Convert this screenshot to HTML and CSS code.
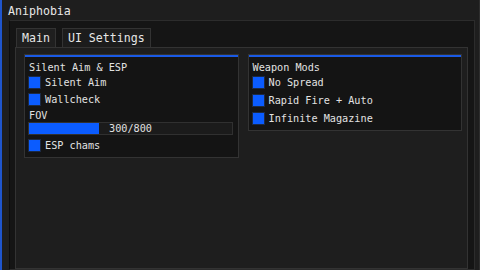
FILE: index.html
```html
<!DOCTYPE html>
<html>
<head>
<meta charset="utf-8">
<link rel="stylesheet" href="styles.css">
</head>
<body>
<div class="window">
  <div class="title">Aniphobia</div>
  <div class="child">
    <div class="tabs">
      <div class="tab active">Main</div>
      <div class="tab">UI Settings</div>
    </div>
    <div class="panel">
      <div class="group">
        <div class="gtitle">Silent Aim &amp; ESP</div>
        <div class="row r1"><span class="cb"></span><span>Silent Aim</span></div>
        <div class="row r2"><span class="cb"></span><span>Wallcheck</span></div>
        <div class="label">FOV</div>
        <div class="slider"><div class="fill" style="width:34.5%"></div><span class="val">300/800</span></div>
        <div class="row r5"><span class="cb"></span><span>ESP chams</span></div>
      </div>
      <div class="group right">
        <div class="gtitle">Weapon Mods</div>
        <div class="row r1"><span class="cb"></span><span>No Spread</span></div>
        <div class="row rr"><span class="cb"></span><span>Rapid Fire + Auto</span></div>
        <div class="row rr"><span class="cb"></span><span>Infinite Magazine</span></div>
      </div>
    </div>
  </div>
</div>
</body>
</html>
```
FILE: styles.css
```css
html, body {
  margin: 0;
  padding: 0;
  background: #1e1e1e;
  overflow: hidden;
}
body {
  width: 480px;
  height: 270px;
  font-family: "DejaVu Sans Mono", "Liberation Mono", monospace;
  color: #e2e2e2;
}
.window {
  box-sizing: border-box;
  width: 480px;
  height: 270px;
  border-left: 2px solid #1f55cc;
  border-right: 1px solid #2e2e2e;
  padding: 0 4px 0 7px;
  display: flex;
  flex-direction: column;
  background: #1e1e1e;
}
.title {
  height: 20px;
  line-height: 22px;
  font-size: 11.6px;
  padding-left: 0px;
  margin-left: -1px;
  color: #e8e8e8;
}
.child {
  flex: 1;
  background: #151515;
  border: 1px solid #2c2c2c;
  border-left-color: #0c0c0c;
  padding: 7px 6px 0 5px;
  display: flex;
  flex-direction: column;
}
.tabs {
  display: flex;
  gap: 6px;
  padding-left: 1px;
  height: 19px;
}
.tab {
  box-sizing: border-box;
  height: 20px;
  border: 1px solid #333;
  border-bottom: none;
  background: #1c1c1c;
  font-size: 11.6px;
  line-height: 19px;
  padding: 0 5px 0 5px;
  color: #e6e6e6;
}
.tab.active {
  background: #1f1f1f;
}
.panel {
  flex: 1;
  background: #1e1e1e;
  border: 1px solid #333;
  padding: 6px 5px 0 8px;
  display: grid;
  grid-template-columns: 1fr 1fr;
  column-gap: 9px;
  align-items: start;
}
.group {
  background: #141414;
  border: 1px solid #333;
  box-shadow: inset 0 2px 0 #1a5ae6;
  padding: 2px 4px 5px 3px;
  display: flex;
  flex-direction: column;
  font-size: 10.2px;
}
.gtitle {
  margin-top: 4px;
  height: 13px;
  line-height: 13px;
  padding-left: 1px;
}
.row {
  display: flex;
  align-items: center;
  height: 13px;
  line-height: 13px;
  gap: 4px;
}
.r1 { margin-top: 2px; }
.r2 { margin-top: 4px; }
.rr { margin-top: 5px; }
.r5 { margin-top: 4px; }
.cb {
  box-sizing: border-box;
  width: 13px;
  height: 13px;
  background: #0b5cff;
  border: 1px solid #1c2a44;
  flex: none;
}
.label {
  margin-top: 4px;
  height: 11px;
  line-height: 11px;
  padding-left: 1px;
}
.slider {
  position: relative;
  margin-top: 1px;
  box-sizing: border-box;
  height: 13px;
  border: 1px solid #303030;
  background: #1b1b1b;
  width: 205px;
}
.fill {
  height: 100%;
  background: #0b5cff;
}
.val {
  position: absolute;
  left: 0;
  right: 0;
  top: 0;
  text-align: center;
  line-height: 12px;
  color: #e0e0e0;
}
```
